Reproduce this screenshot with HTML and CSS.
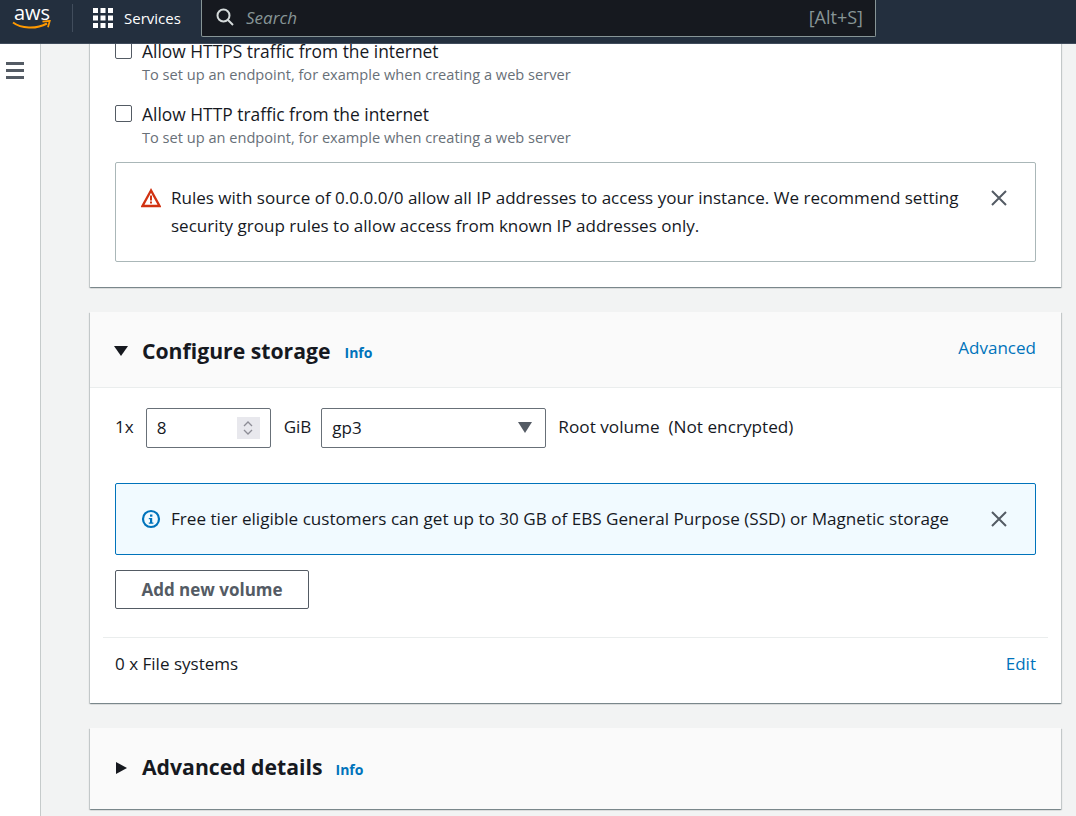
FILE: index.html
```html
<!DOCTYPE html>
<html lang="en">

<head>
    <meta charset="UTF-8">
    <title>Launch an instance</title>
    <link rel="stylesheet" href="styles.css">
</head>

<body>
    <header class="topbar">
        <div class="logo">
            <span class="logoText">aws</span>
            <svg class="logoSmile" width="40" height="11" viewBox="0 0 40 11">
                <path d="M1 2.500C9 8.500 24 9.500 35 3.500" fill="none" stroke="#f90" stroke-width="2"/>
                <path d="M30.500 1.600L37.800 0.800L36 7.200" fill="none" stroke="#f90" stroke-width="1.700"/>
            </svg>
        </div>
        <div class="divider"></div>
        <div class="services">
            <svg class="grid" width="20" height="20" viewBox="0 0 20 20" fill="#fff">
                <rect width="5" height="5"/><rect x="7.500" width="5" height="5"/><rect x="15" width="5" height="5"/>
                <rect y="7.500" width="5" height="5"/><rect x="7.500" y="7.500" width="5" height="5"/><rect x="15" y="7.500" width="5" height="5"/>
                <rect y="15" width="5" height="5"/><rect x="7.500" y="15" width="5" height="5"/><rect x="15" y="15" width="5" height="5"/>
            </svg>
            <span>Services</span>
        </div>
        <div class="search">
            <svg width="18" height="18" viewBox="0 0 18 18" fill="none" stroke="#d5dbdb" stroke-width="2">
                <circle cx="7.500" cy="7.500" r="6"/>
                <path d="M12 12l5 5"/>
            </svg>
            <span class="searchText">Search</span>
            <span class="shortcut">[Alt+S]</span>
        </div>
    </header>

    <div class="page">
        <aside class="sidebar">
            <div class="menuIcon"><span></span><span></span><span></span></div>
        </aside>

        <main class="content">
            <section class="card firstCard">
                <div class="checkRow">
                    <span class="checkbox"></span>
                    <div>
                        <div class="checkLabel">Allow HTTPS traffic from the internet</div>
                        <div class="checkHint">To set up an endpoint, for example when creating a web server</div>
                    </div>
                </div>
                <div class="checkRow">
                    <span class="checkbox"></span>
                    <div>
                        <div class="checkLabel">Allow HTTP traffic from the internet</div>
                        <div class="checkHint">To set up an endpoint, for example when creating a web server</div>
                    </div>
                </div>
                <div class="alert warning">
                    <svg class="alertIcon" width="20" height="20" viewBox="0 0 20 20">
                        <path d="M10 2.500L1.500 18h17z" fill="none" stroke="#d13212" stroke-width="2.300"/>
                        <rect x="9" y="7.500" width="2" height="5" fill="#d13212"/>
                        <rect x="9" y="13.500" width="2" height="2" fill="#d13212"/>
                    </svg>
                    <p>Rules with source of 0.0.0.0/0 allow all IP addresses to access your instance. We recommend setting security group rules to allow access from known IP addresses only.</p>
                    <svg class="closeIcon" width="16" height="16" viewBox="0 0 16 16">
                        <path d="M1 1l14 14M15 1L1 15" stroke="#545b64" stroke-width="2"/>
                    </svg>
                </div>
            </section>

            <section class="card">
                <div class="cardHead storageHead">
                    <span class="arrowDown"></span>
                    <h2>Configure storage</h2>
                    <a class="info">Info</a>
                    <a class="advanced">Advanced</a>
                </div>
                <div class="cardBody">
                    <div class="volumeRow">
                        <span class="unit">1x</span>
                        <div class="field sizeField">
                            <span>8</span>
                            <span class="spinner">
                                <svg width="10" height="16" viewBox="0 0 10 16" fill="none" stroke="#8d8d96" stroke-width="1.300">
                                    <path d="M1 6l4-4 4 4M1 10l4 4 4-4"/>
                                </svg>
                            </span>
                        </div>
                        <span class="unit">GiB</span>
                        <div class="field typeField">
                            <span>gp3</span>
                            <span class="selectArrow"></span>
                        </div>
                        <span class="rootText">Root volume&nbsp; (Not encrypted)</span>
                    </div>
                    <div class="alert notice">
                        <svg class="alertIcon" width="20" height="20" viewBox="0 0 20 20">
                            <circle cx="10" cy="10" r="8" fill="none" stroke="#0073bb" stroke-width="2.200"/>
                            <rect x="9" y="5.500" width="2.400" height="2.200" fill="#0073bb"/>
                            <path d="M7.800 9h3.400v4.600h1.200v1.200H7.800v-1.200H9V10.200H7.800z" fill="#0073bb"/>
                        </svg>
                        <p>Free tier eligible customers can get up to 30 GB of EBS General Purpose (SSD) or Magnetic storage</p>
                        <svg class="closeIcon" width="16" height="16" viewBox="0 0 16 16">
                            <path d="M1 1l14 14M15 1L1 15" stroke="#545b64" stroke-width="2"/>
                        </svg>
                    </div>
                    <button class="addButton">Add new volume</button>
                </div>
                <div class="fileRow">
                    <span>0 x File systems</span>
                    <a class="edit">Edit</a>
                </div>
            </section>

            <section class="card">
                <div class="cardHead detailsHead">
                    <span class="arrowRight"></span>
                    <h2>Advanced details</h2>
                    <a class="info">Info</a>
                </div>
            </section>
        </main>
    </div>
</body>

</html>
```

FILE: styles.css
```css
* {
    margin: 0;
    padding: 0;
    box-sizing: border-box;
}

html,
body {
    width: 100%;
    height: 100%;
    overflow: hidden;
}

body {
    font-family: "Open Sans", "Noto Sans", sans-serif;
    font-size: 17.05px;
    color: #16191f;
    background-color: #f2f3f3;
    display: flex;
    flex-direction: column;
}

/* top bar */
.topbar {
    position: relative;
    z-index: 2;
    height: 44px;
    flex-shrink: 0;
    background-color: #232f3e;
    border-bottom: 1px solid #3f4b5b;
    display: flex;
    align-items: flex-start;
    color: #fff;
}

.logo {
    width: 40px;
    margin-left: 12px;
    height: 32px;
    display: flex;
    flex-direction: column;
    align-items: center;
}

.logoText {
    font-size: 20px;
    line-height: 20px;
    margin-top: 3px;
}

.logoSmile {
    margin-top: -3px;
}

.divider {
    width: 1px;
    height: 28px;
    margin: 4px 0 0 20px;
    background-color: #414d5c;
}

.services {
    display: flex;
    align-items: center;
    gap: 11px;
    margin-left: 20px;
    height: 36px;
    font-size: 15px;
    width: 108px;
}

.search {
    width: 675px;
    height: 37px;
    background-color: #16191f;
    border: 1px solid #879596;
    border-top: 0;
    border-radius: 0 0 2px 2px;
    display: flex;
    align-items: center;
    padding: 0 12px 2px 14px;
}

.searchText {
    margin-left: 12px;
    font-style: italic;
    color: #879596;
}

.shortcut {
    margin-left: auto;
    font-size: 18px;
    color: #879596;
}

/* page */
.page {
    flex: 1;
    display: flex;
    min-height: 0;
}

.sidebar {
    width: 41px;
    flex-shrink: 0;
    background-color: #fff;
    border-right: 1px solid #c6cbcb;
    padding: 18px 0 0 6px;
}

.menuIcon {
    width: 18px;
    display: flex;
    flex-direction: column;
    gap: 4px;
}

.menuIcon span {
    height: 3px;
    background-color: #545b64;
}

.content {
    flex: 1;
    padding: 0 15px 0 49px;
    min-width: 0;
}

.card {
    background-color: #fff;
    box-shadow: 0 1px 1px 0 rgba(0, 28, 36, 0.3), 1px 1px 1px 0 rgba(0, 28, 36, 0.15), -1px 1px 1px 0 rgba(0, 28, 36, 0.15);
    margin-bottom: 25px;
}

.firstCard {
    margin-top: -8px;
    padding: 0 25px 25px;
    height: 251px;
}

.checkRow {
    display: flex;
    gap: 10px;
    height: 63px;
}

.checkbox {
    width: 17px;
    height: 17px;
    margin-top: 6px;
    border: 1px solid #545b64;
    border-radius: 2px;
    background-color: #fff;
    flex-shrink: 0;
}

.checkLabel {
    font-size: 17.4px;
    line-height: 24px;
    margin-top: 3px;
}

.checkHint {
    font-size: 14.6px;
    line-height: 20px;
    color: #687078;
    margin-top: 1px;
}

.alert {
    display: flex;
    align-items: flex-start;
    border: 1px solid #aab7b8;
    border-radius: 2px;
    padding: 21px 28px 21px 25px;
}

.alert p {
    flex: 1;
    line-height: 28px;
    margin-left: 10px;
}

.warning {
    height: 100px;
}

.alertIcon {
    flex-shrink: 0;
    margin-top: 4px;
}

.closeIcon {
    flex-shrink: 0;
    margin: 6px 0 0 20px;
}

.cardHead {
    background-color: #fafafa;
    display: flex;
    align-items: center;
    padding: 0 25px;
}

.storageHead {
    height: 76px;
    border-bottom: 1px solid #eaeded;
}

.detailsHead {
    height: 81px;
}

.cardHead h2 {
    font-size: 21.2px;
    font-weight: 700;
    line-height: 28px;
    margin: 2px 0 0 14px;
}

.detailsHead h2 {
    margin: -4px 0 0 14px;
}

.info {
    font-size: 14px;
    font-weight: 700;
    color: #0073bb;
    margin: 6px 0 0 14px;
}

.detailsHead .info {
    margin: 2px 0 0 13px;
}

.advanced {
    margin-left: auto;
    margin-top: -5px;
    color: #0073bb;
}

.arrowDown {
    width: 0;
    height: 0;
    border-left: 7px solid transparent;
    border-right: 7px solid transparent;
    border-top: 10px solid #16191f;
    margin: 3px 0 0 -1px;
}

.arrowRight {
    width: 0;
    height: 0;
    border-top: 6.5px solid transparent;
    border-bottom: 6.5px solid transparent;
    border-left: 11px solid #16191f;
    margin: -2px 1px 0 1px;
}

.cardBody {
    padding: 20px 25px 0;
}

.volumeRow {
    display: flex;
    align-items: center;
    height: 40px;
}

.unit {
    margin-top: -3px;
}

.field {
    height: 40px;
    border: 1px solid #687078;
    border-radius: 2px;
    display: flex;
    align-items: center;
    padding: 0 11px 1px 10px;
}

.sizeField {
    width: 125px;
    margin: 0 13px 0 12px;
    justify-content: space-between;
}

.spinner {
    width: 23px;
    height: 22px;
    background-color: #e8e8ed;
    display: flex;
    align-items: center;
    justify-content: center;
    margin-right: -1px;
}

.typeField {
    width: 225px;
    margin-left: 10px;
    justify-content: space-between;
}

.selectArrow {
    width: 0;
    height: 0;
    border-left: 7px solid transparent;
    border-right: 7px solid transparent;
    border-top: 11px solid #545b64;
    margin-right: 2px;
}

.rootText {
    font-size: 17.2px;
    margin: -3px 0 0 12px;
}

.notice {
    margin-top: 35px;
    height: 72px;
    background-color: #f1faff;
    border-color: #0073bb;
}

.notice p {
    font-size: 17.12px;
}

.addButton {
    display: block;
    width: 194px;
    height: 39px;
    margin-top: 15px;
    background-color: #fff;
    border: 1px solid #545b64;
    border-radius: 2px;
    font-family: inherit;
    font-size: 17px;
    font-weight: 700;
    color: #545b64;
}

.fileRow {
    margin: 28px 13px 0;
    padding: 14px 12px 0;
    height: 66px;
    border-top: 1px solid #eaeded;
    display: flex;
    align-items: flex-start;
    justify-content: space-between;
}

.edit {
    color: #0073bb;
}
```
